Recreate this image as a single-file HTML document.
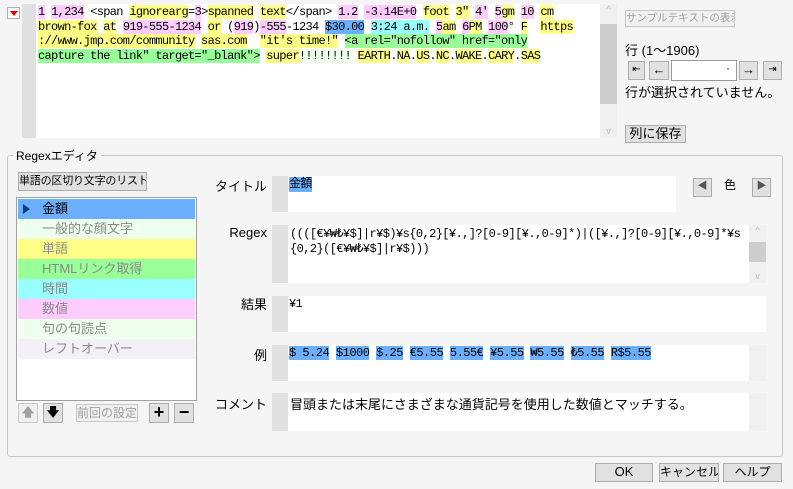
<!DOCTYPE html>
<html><head><meta charset="utf-8"><style>
*{box-sizing:border-box;margin:0;padding:0}
body{width:793px;height:489px;background:#f5f5f5;font-family:"Liberation Sans","Noto Sans CJK JP",sans-serif;font-size:12px;color:#000;position:relative;overflow:hidden}
.a{position:absolute}
.mono{font-family:"Liberation Mono","Noto Sans CJK JP",monospace;font-size:12px;letter-spacing:-0.68px;white-space:pre;line-height:14.5px}
.btn{position:absolute;background:#e1e1e1;border:1px solid #adadad;text-align:center;font-size:12px;line-height:16px;white-space:nowrap;overflow:hidden}
.dis{color:#a0a0a0;border-color:#c8c8c8;background:#f0f0f0}
.y{background:#ffff88}.p{background:#ffccff}.b{background:#6ab0ff}.c{background:#99ffff}.g{background:#99ff99}.l{background:#eeffee}
.lab{position:absolute;right:526px;font-size:13px;text-align:right;white-space:nowrap}
.gut{position:absolute;background:#e0e0e0;width:16px;left:272px}
.fld{position:absolute;background:#fff;left:288px}
.sb{position:absolute;background:#f0f0f0;width:17px;color:#bbb;font-size:9px;text-align:center}
.li{height:20px;line-height:20px;padding-left:24px;font-size:13px;color:#8a8a8a}
</style></head><body>
<div class="a" style="left:7px;top:7px;width:13px;height:12px;border:1px solid #b0b0b0;background:#fff"><div class="a" style="left:2px;top:3px;border-left:4px solid transparent;border-right:4px solid transparent;border-top:5px solid #d00"></div></div>
<div class="a" style="left:22px;top:4px;width:14px;height:134px;background:#e0e0e0"></div>
<div class="a" style="left:36px;top:4px;width:564px;height:134px;background:#fff"></div>
<div class="a mono" style="left:38px;top:5px"><span class="p">1</span> <span class="p">1,234</span> &lt;span <span class="y">ignorearg</span>=<span class="p">3</span>&gt;<span class="y">spanned</span> <span class="y">text</span>&lt;/span&gt; <span class="p">1.2</span> <span class="p">-3.14E+0</span> <span class="y">foot</span> <span class="y">3″</span> <span class="p">4′</span> <span class="p">5</span><span class="y">gm</span> <span class="p">10</span> <span class="y">cm</span>
<span class="y">brown-fox</span> <span class="y">at</span> <span class="p">919-555-1234</span> <span class="y">or</span> (<span class="p">919</span>)<span class="p">-555</span>-1234 <span class="b">$30.00</span> <span class="c">3:24 a.m.</span> <span class="p">5</span><span class="y">am</span> <span class="p">6</span><span class="y">PM</span> <span class="p">100</span>° <span class="y">F</span>  <span class="y">https</span>
<span class="y">://www.jmp.com/community</span> <span class="y">sas.com</span>  <span class="y">"it's time!"</span> <span class="g">&lt;a rel="nofollow" href="only</span>
<span class="g">capture the link" target="_blank"&gt;</span> <span class="y">super</span><span class="l">!!!!!!!!</span> <span class="y">EARTH</span>.<span class="y">NA</span>.<span class="y">US</span>.<span class="y">NC</span>.<span class="y">WAKE</span>.<span class="y">CARY</span>.<span class="y">SAS</span></div>
<div class="sb" style="left:600px;top:4px;height:134px">^<div style="position:absolute;top:20px;left:0;width:17px;height:80px;background:#cdcdcd"></div><div style="position:absolute;bottom:2px;width:17px">v</div></div>

<div class="btn dis" style="left:625px;top:10px;width:110px;height:17px;font-size:10.5px;line-height:15px">サンプルテキストの表示</div>
<div class="a" style="left:625px;top:40px;font-size:13px">行 (1〜1906)</div>
<div class="btn" style="left:628px;top:61px;width:17px;height:19px;font-size:10px">⇤</div>
<div class="btn" style="left:649px;top:61px;width:20px;height:19px;font-size:13px;font-weight:bold">←</div>
<div class="a" style="left:671px;top:60px;width:66px;height:21px;background:#fff;border:1px solid #999;text-align:right;padding-right:6px">·</div>
<div class="btn" style="left:739px;top:61px;width:19px;height:19px;font-size:13px;font-weight:bold">→</div>
<div class="btn" style="left:763px;top:61px;width:19px;height:19px;font-size:10px">⇥</div>
<div class="a" style="left:625px;top:82px;font-size:13px">行が選択されていません。</div>
<div class="btn" style="left:625px;top:125px;width:61px;height:18px;font-size:13px">列に保存</div>

<div class="a" style="left:7px;top:155px;width:776px;height:302px;border:1px solid #c8c8c8;border-radius:3px"></div>
<div class="a" style="left:13px;top:147px;background:#f5f5f5;padding:0 3px;font-size:12px">Regexエディタ</div>
<div class="btn" style="left:18px;top:172px;width:129px;height:19px;font-size:11px;letter-spacing:-0.2px">単語の区切り文字のリスト</div>
<div class="a" style="left:16px;top:197px;width:181px;height:204px;background:#fff;border:1px solid #a0a0a0;padding:1px">
<div class="li" style="background:#6ab0ff;color:#000;position:relative"><span style="position:absolute;left:5px;top:5px;border-top:5px solid transparent;border-bottom:5px solid transparent;border-left:7px solid #0a3b8a"></span>金額</div>
<div class="li" style="background:#eeffee">一般的な顔文字</div>
<div class="li" style="background:#ffff88">単語</div>
<div class="li" style="background:#99ff99">HTMLリンク取得</div>
<div class="li" style="background:#99ffff">時間</div>
<div class="li" style="background:#ffccff">数値</div>
<div class="li" style="background:#eeffee">句の句読点</div>
<div class="li" style="background:#f3f0f8">レフトオーバー</div>
</div>
<div class="btn dis" style="left:18px;top:403px;width:20px;height:20px;font-weight:bold">🡅</div>
<div class="btn" style="left:43px;top:403px;width:20px;height:20px;font-weight:bold">🡇</div>
<div class="btn dis" style="left:76px;top:404px;width:62px;height:18px">前回の設定</div>
<div class="btn" style="left:149px;top:403px;width:20px;height:20px;font-size:18px;font-weight:bold;line-height:17px">+</div>
<div class="btn" style="left:174px;top:403px;width:20px;height:20px;font-size:18px;font-weight:bold;line-height:17px">−</div>

<div class="lab" style="top:176px">タイトル</div>
<div class="gut" style="top:176px;height:36px"></div>
<div class="fld" style="top:176px;width:388px;height:36px"><span class="mono b" style="position:absolute;left:1px;top:1px">金額</span></div>
<div class="btn" style="left:693px;top:178px;width:19px;height:19px;color:#555;font-size:10px">◀</div>
<div class="a" style="left:724px;top:176px;font-size:12px">色</div>
<div class="btn" style="left:752px;top:178px;width:19px;height:19px;color:#555;font-size:10px">▶</div>

<div class="lab" style="top:225px">Regex</div>
<div class="gut" style="top:225px;height:58px"></div>
<div class="fld" style="top:225px;width:461px;height:58px"><div class="mono" style="position:absolute;left:2px;top:2px;letter-spacing:-0.58px">((([€¥₩₺¥$]|r¥$)¥s{0,2}[¥.,]?[0-9][¥.,0-9]*)|([¥.,]?[0-9][¥.,0-9]*¥s
{0,2}([€¥₩₺¥$]|r¥$)))</div></div>
<div class="sb" style="left:749px;top:225px;height:58px">^<div style="position:absolute;top:17px;width:17px;height:20px;background:#cdcdcd"></div><div style="position:absolute;bottom:2px;width:17px">v</div></div>

<div class="lab" style="top:294px">結果</div>
<div class="gut" style="top:296px;height:36px"></div>
<div class="fld" style="top:296px;width:478px;height:36px"><span class="mono" style="position:absolute;left:1px;top:1px">¥1</span></div>

<div class="lab" style="top:345px">例</div>
<div class="gut" style="top:345px;height:36px"></div>
<div class="fld" style="top:345px;width:461px;height:36px"><div class="mono" style="position:absolute;left:1px;top:1px;letter-spacing:-0.5px"><span class="b">$ 5.24</span> <span class="b">$1000</span> <span class="b">$.25</span> <span class="b">€5.55</span> <span class="b">5.55€</span> <span class="b">¥5.55</span> <span class="b">₩5.55</span> <span class="b">₺5.55</span> <span class="b">R$5.55</span></div></div>
<div class="sb" style="left:749px;top:345px;height:36px"></div>

<div class="lab" style="top:394px">コメント</div>
<div class="gut" style="top:393px;height:38px"></div>
<div class="fld" style="top:393px;width:461px;height:38px"><div style="position:absolute;left:2px;top:1px;font-size:13px">冒頭または末尾にさまざまな通貨記号を使用した数値とマッチする。</div></div>
<div class="sb" style="left:749px;top:393px;height:38px"></div>

<div class="btn" style="left:595px;top:463px;width:58px;height:19px;font-size:13px">OK</div>
<div class="btn" style="left:659px;top:463px;width:60px;height:19px;font-size:12px">キャンセル</div>
<div class="btn" style="left:723px;top:463px;width:59px;height:19px;font-size:12px">ヘルプ</div>
</body></html>
